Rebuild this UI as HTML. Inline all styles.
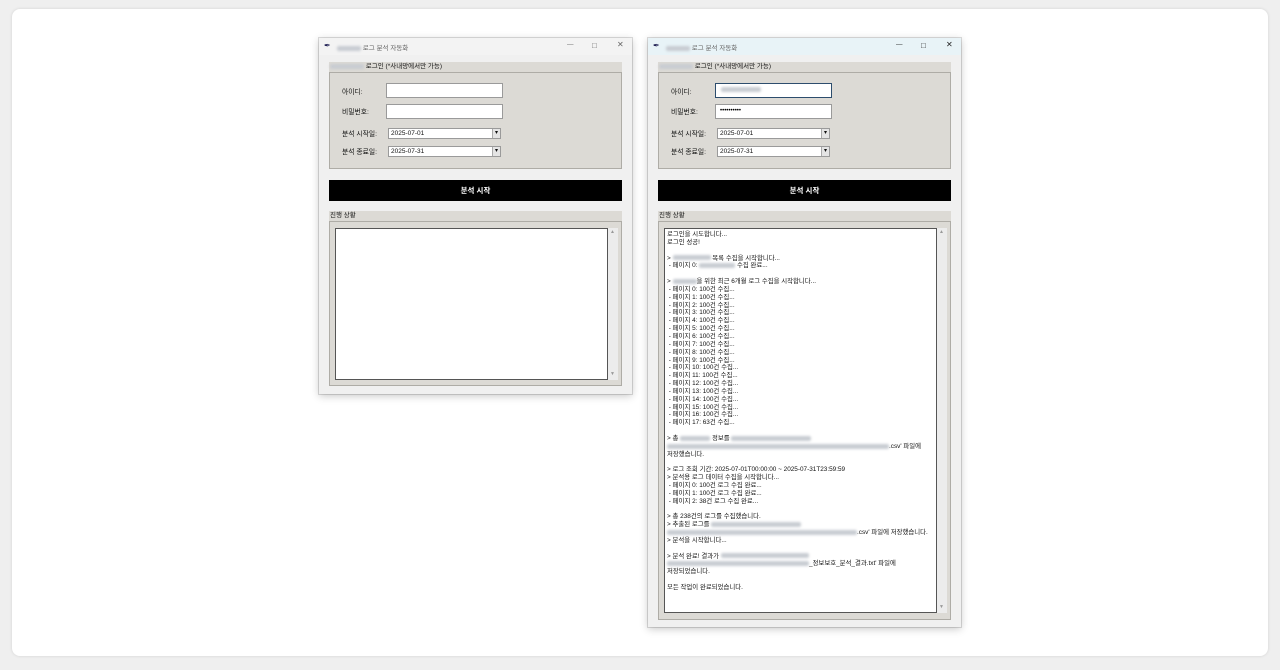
<!DOCTYPE html>
<html><head><meta charset="utf-8"><style>
*{box-sizing:border-box;margin:0;padding:0}
body{width:1280px;height:670px;background:#efefef;font-family:"Liberation Sans","Noto Sans CJK KR",sans-serif;position:relative;overflow:hidden}
.card{position:absolute;left:12px;top:9px;width:1256px;height:647px;background:#fff;border-radius:8px;box-shadow:0 0 3px rgba(0,0,0,.12)}
.win{position:absolute;width:313px;background:#f0f0f0;box-shadow:0 2px 8px rgba(0,0,0,.22),0 0 0 1px #ddd}
.win *{position:absolute}
.tb{left:0;top:0;width:100%;height:17px;background:#f3f3f3;font-size:6.5px;color:#666}
.tb .t{left:18px;top:4px;white-space:nowrap}
.blur{display:inline-block;background:#c8ccd2;filter:blur(1.3px);height:5px;vertical-align:middle;position:static!important;border-radius:2px}
.strip{left:10px;width:293px;height:10px;background:#dcdad5;font-size:6.5px;color:#111;white-space:nowrap;padding-left:1px;line-height:10px}
.frame{left:10px;width:293px;background:#dcdad5;border:1px solid #aeaca6}
.lbl{font-size:6.8px;color:#111;white-space:nowrap}
.inp{background:#fff;border:1px solid #9a9a9a;height:15px;width:117px}
.cb{background:#fff;border:1px solid #9a9a9a;height:11px;width:113px;font-size:6.5px;line-height:9px;padding-left:2px;color:#111}
.cb:after{content:"▾";position:absolute;right:0;top:0;width:7px;height:9px;background:#e4e4e4;border-left:1px solid #aaa;font-size:6px;text-align:center;line-height:9px}
.btn{left:10px;width:293px;height:21px;top:142px;background:#000;color:#fff;font-size:7.5px;text-align:center;line-height:21px;font-weight:bold}
.ta{left:5px;top:6px;background:#fff;border:1px solid #555;width:273px}
.sb{top:6px;width:10px;background:#ececec;left:278px}
.log{left:2px;top:2px;font-size:6.4px;line-height:7.84px;color:#111;white-space:pre}
</style></head><body>
<div class="card"></div>

<div class="win" style="left:319px;top:38px;height:356px">
 <div class="tb"><span style="left:5px;top:3px;color:#225;font-size:8px">✒</span><div class="t"><span class="blur" style="width:24px"></span> 로그 분석 자동화</div>
 <span style="left:248px;top:3px">—</span><span style="left:273px;top:3px;font-size:8px">□</span><span style="left:298px;top:2px;font-size:8px">✕</span></div>
 <div class="strip" style="top:24px"><span class="blur" style="width:34px"></span> 로그인 (*사내망에서만 가능)</div>
 <div class="frame" style="top:34px;height:97px"></div>
 <div class="lbl" style="left:23px;top:48px">아이디:</div><div class="inp" style="left:67px;top:45px"></div>
 <div class="lbl" style="left:23px;top:68px">비밀번호:</div><div class="inp" style="left:67px;top:66px"></div>
 <div class="lbl" style="left:23px;top:90px">분석 시작일:</div><div class="cb" style="left:69px;top:90px">2025-07-01</div>
 <div class="lbl" style="left:23px;top:108px">분석 종료일:</div><div class="cb" style="left:69px;top:108px">2025-07-31</div>
 <div class="btn">분석 시작</div>
 <div class="strip" style="top:173px">진행 상황</div>
 <div class="frame" style="top:183px;height:165px">
  <div class="ta" style="height:152px"></div>
  <div class="sb" style="height:152px"><span style="left:2px;top:1px;font-size:5px;color:#999">▲</span><span style="left:2px;top:143px;font-size:5px;color:#999">▼</span></div>
 </div>
</div>

<div class="win" style="left:648px;top:38px;height:589px">
 <div class="tb" style="background:#e8f3f7"><span style="left:5px;top:3px;color:#225;font-size:8px">✒</span><div class="t"><span class="blur" style="width:24px"></span> 로그 분석 자동화</div>
 <span style="left:248px;top:3px;color:#222">—</span><span style="left:273px;top:3px;font-size:8px;color:#222">□</span><span style="left:298px;top:2px;font-size:8px;color:#222">✕</span></div>
 <div class="strip" style="top:24px"><span class="blur" style="width:34px"></span> 로그인 (*사내망에서만 가능)</div>
 <div class="frame" style="top:34px;height:97px"></div>
 <div class="lbl" style="left:23px;top:48px">아이디:</div><div class="inp" style="left:67px;top:45px;border-color:#2d4d6d;line-height:12px;padding-left:5px"><span class="blur" style="width:40px"></span></div>
 <div class="lbl" style="left:23px;top:68px">비밀번호:</div><div class="inp" style="left:67px;top:66px;font-size:6px;padding-left:4px;line-height:12px">••••••••••</div>
 <div class="lbl" style="left:23px;top:90px">분석 시작일:</div><div class="cb" style="left:69px;top:90px">2025-07-01</div>
 <div class="lbl" style="left:23px;top:108px">분석 종료일:</div><div class="cb" style="left:69px;top:108px">2025-07-31</div>
 <div class="btn">분석 시작</div>
 <div class="strip" style="top:173px">진행 상황</div>
 <div class="frame" style="top:183px;height:399px">
  <div class="ta" style="height:385px"><div class="log">로그인을 시도합니다...
로그인 성공!

> <span class="blur" style="width:38px"></span> 목록 수집을 시작합니다...
 - 페이지 0: <span class="blur" style="width:36px"></span> 수집 완료...

> <span class="blur" style="width:24px"></span>을 위한 최근 6개월 로그 수집을 시작합니다...
 - 페이지 0: 100건 수집...
 - 페이지 1: 100건 수집...
 - 페이지 2: 100건 수집...
 - 페이지 3: 100건 수집...
 - 페이지 4: 100건 수집...
 - 페이지 5: 100건 수집...
 - 페이지 6: 100건 수집...
 - 페이지 7: 100건 수집...
 - 페이지 8: 100건 수집...
 - 페이지 9: 100건 수집...
 - 페이지 10: 100건 수집...
 - 페이지 11: 100건 수집...
 - 페이지 12: 100건 수집...
 - 페이지 13: 100건 수집...
 - 페이지 14: 100건 수집...
 - 페이지 15: 100건 수집...
 - 페이지 16: 100건 수집...
 - 페이지 17: 63건 수집...

> 총 <span class="blur" style="width:30px"></span> 정보를 <span class="blur" style="width:80px"></span>
<span class="blur" style="width:222px"></span>.csv' 파일에
저장했습니다.

> 로그 조회 기간: 2025-07-01T00:00:00 ~ 2025-07-31T23:59:59
> 분석용 로그 데이터 수집을 시작합니다...
 - 페이지 0: 100건 로그 수집 완료...
 - 페이지 1: 100건 로그 수집 완료...
 - 페이지 2: 38건 로그 수집 완료...

> 총 238건의 로그를 수집했습니다.
> 추출된 로그를 <span class="blur" style="width:90px"></span>
<span class="blur" style="width:190px"></span>.csv' 파일에 저장했습니다.
> 분석을 시작합니다...

> 분석 완료! 결과가 <span class="blur" style="width:88px"></span>
<span class="blur" style="width:142px"></span>_정보보호_분석_결과.txt' 파일에
저장되었습니다.

모든 작업이 완료되었습니다.</div></div>
  <div class="sb" style="height:385px"><span style="left:2px;top:1px;font-size:5px;color:#999">▲</span><span style="left:2px;top:376px;font-size:5px;color:#999">▼</span></div>
 </div>
</div>
</body></html>
